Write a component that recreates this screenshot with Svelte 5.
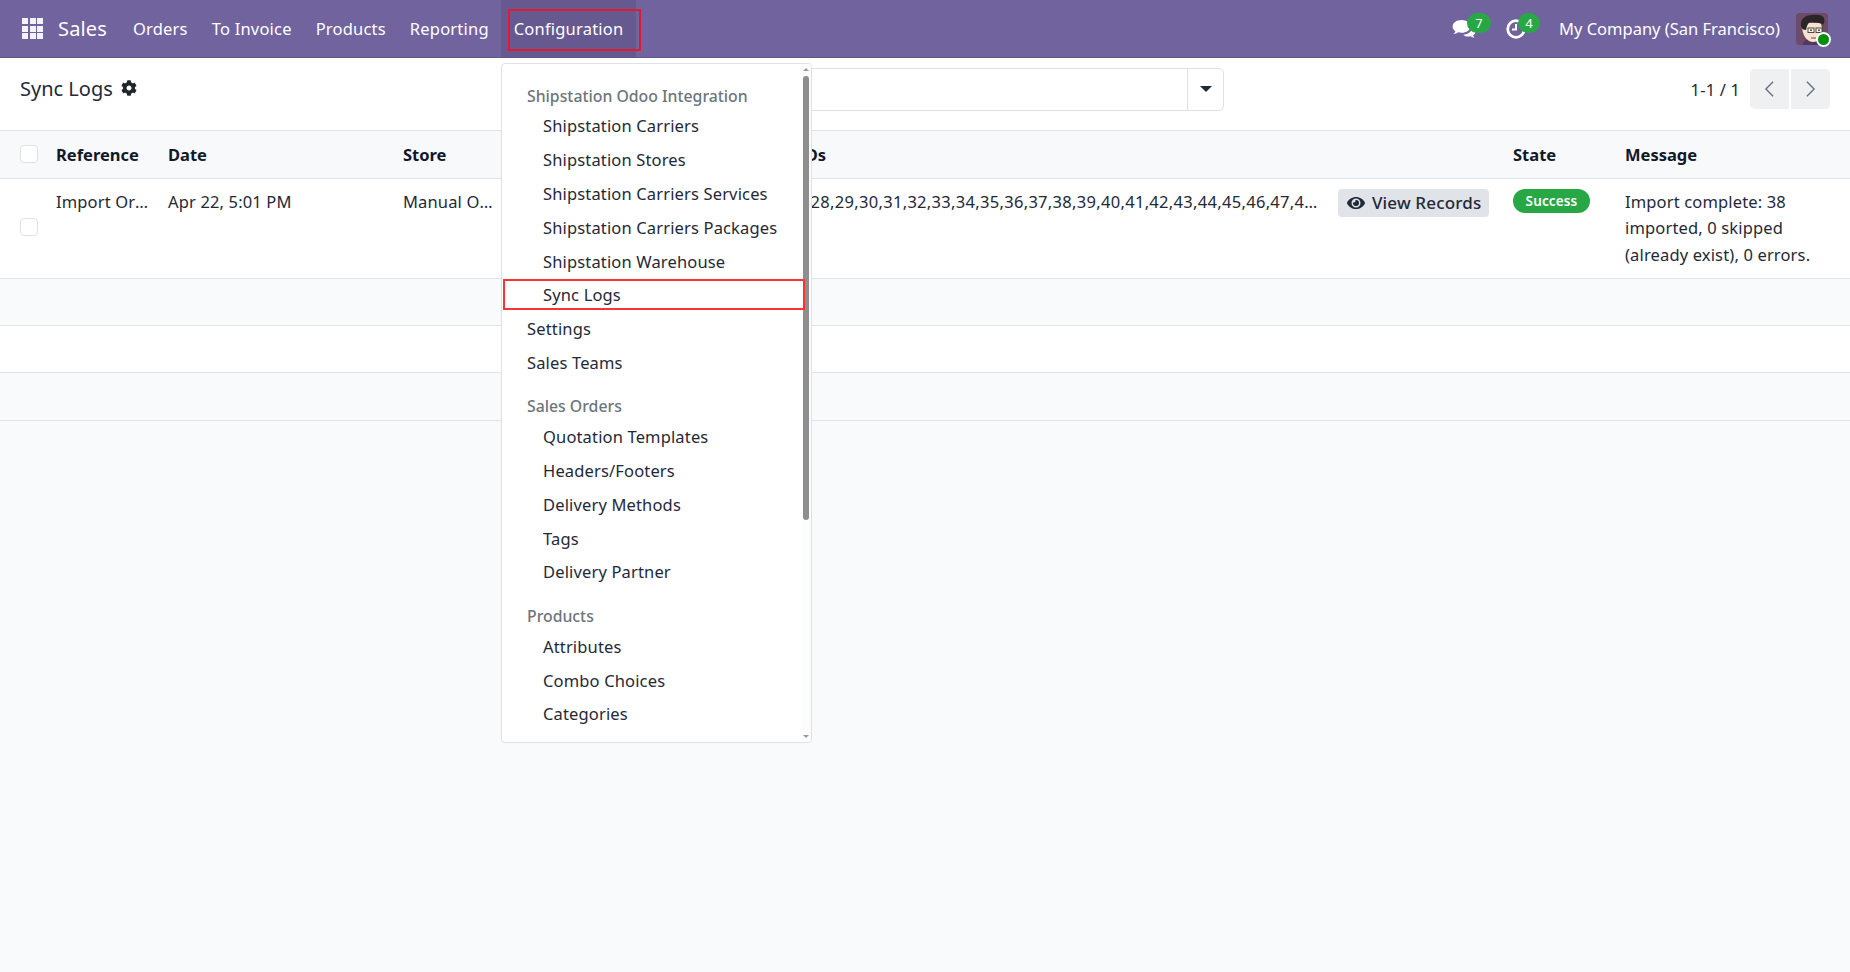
<script lang="ts">
  const appsCells = Array.from({ length: 9 });
  const navItems = ['Orders', 'To Invoice', 'Products', 'Reporting'];
  const ids = Array.from({ length: 38 }, (_, i) => i + 25).join(',');

  type Entry = { label: string; nested?: boolean; header?: boolean; marked?: boolean };
  const menu: Entry[] = [
    { label: 'Shipstation Odoo Integration', header: true },
    { label: 'Shipstation Carriers', nested: true },
    { label: 'Shipstation Stores', nested: true },
    { label: 'Shipstation Carriers Services', nested: true },
    { label: 'Shipstation Carriers Packages', nested: true },
    { label: 'Shipstation Warehouse', nested: true },
    { label: 'Sync Logs', nested: true, marked: true },
    { label: 'Settings' },
    { label: 'Sales Teams' },
    { label: 'Sales Orders', header: true },
    { label: 'Quotation Templates', nested: true },
    { label: 'Headers/Footers', nested: true },
    { label: 'Delivery Methods', nested: true },
    { label: 'Tags', nested: true },
    { label: 'Delivery Partner', nested: true },
    { label: 'Products', header: true },
    { label: 'Attributes', nested: true },
    { label: 'Combo Choices', nested: true },
    { label: 'Categories', nested: true },
    { label: 'Units', nested: true }
  ];
</script>

<div class="page">
  <header class="navbar">
    <div class="apps">
      {#each appsCells as _}
        <span></span>
      {/each}
    </div>
    <span class="brand">Sales</span>
    <nav class="nav-items">
      {#each navItems as item}
        <span class="nav-item">{item}</span>
      {/each}
      <span class="nav-item nav-item--open">Configuration</span>
    </nav>
    <div class="systray">
      <div class="tray-icon tray-icon--chat">
        <svg viewBox="0 0 24 20" width="24" height="20">
          <path fill="#fff" d="M9.5 1C4.5 1 .6 3.9.6 7.5c0 1.900 1.100 3.600 2.800 4.800-.3 1-1 1.900-1.900 2.700 1.700-.1 3.300-.8 4.500-1.700 1.100.3 2.300.5 3.500.5 5 0 8.900-2.900 8.900-6.300C18.400 3.900 14.500 1 9.500 1z"/>
          <path fill="#fff" d="M20 7.600c.1.300.1.600.1.900 0 4-4.100 7-9 7.200 1.400 1.300 3.300 1.900 5.300 1.900.8 0 1.600-.1 2.400-.3.900.7 2.300 1.300 3.600 1.400-.6-.6-1.100-1.400-1.400-2.100 1.500-1 2.400-2.400 2.400-4 0-1.900-1.100-3.500-2.900-4.600z"/>
        </svg>
        <span class="badge badge--chat">7</span>
      </div>
      <div class="tray-icon tray-icon--clock">
        <svg viewBox="0 0 22 22" width="22" height="22">
          <circle cx="11" cy="11" r="8.300" fill="none" stroke="#fff" stroke-width="2.800"/>
          <path d="M11 6v5.500H7" fill="none" stroke="#fff" stroke-width="2"/>
        </svg>
        <span class="badge badge--clock">4</span>
      </div>
      <span class="company">My Company (San Francisco)</span>
      <div class="avatar">
        <svg viewBox="0 0 32 32" width="32" height="32">
          <rect width="32" height="32" rx="4" fill="#6d4a68"/>
          <path d="M7 32c0-4 3-6 9-6s11 2 11 6z" fill="#4f3a5c"/>
          <path d="M6 13c0 9 5 16 11 16s9-5 9-13l-1-6H10z" fill="#f6e2cf"/>
          <path d="M5 13C4 6 9 2 16 2c5-1 11 0 12 3 1 3 0 5-1 7-2-2-7-3-12-3-2 0-3 2-4 4l-1 4c-3 0-4-1-5-4z" fill="#2b2528"/>
          <rect x="12" y="15" width="6" height="4.500" fill="#f9efe4" stroke="#3a3a3a" stroke-width="0.900"/>
          <rect x="20" y="15" width="6" height="4.500" fill="#f9efe4" stroke="#3a3a3a" stroke-width="0.900"/>
          <circle cx="15" cy="17.200" r="0.900" fill="#333"/>
          <circle cx="23" cy="17.200" r="0.900" fill="#333"/>
          <path d="M15 25h5" stroke="#a5584f" stroke-width="1.200"/>
        </svg>
        <span class="online"></span>
      </div>
    </div>
  </header>

  <section class="control-panel">
    <div class="title">
      <span>Sync Logs</span>
      <svg class="gear" viewBox="0 0 512 512" width="16" height="16">
        <path fill="#212529" d="M487.400 315.700l-42.600-24.600c4.300-23.200 4.300-47 0-70.200l42.600-24.600c4.900-2.800 7.100-8.600 5.500-14-11.100-35.600-30-67.800-54.700-94.600-3.800-4.100-10-5.100-14.800-2.300L380.800 110c-17.900-15.400-38.500-27.300-60.800-35.100V25.800c0-5.600-3.900-10.500-9.400-11.700-36.700-8.200-74.300-7.800-109.200 0-5.500 1.200-9.400 6.100-9.400 11.700V75c-22.200 7.900-42.800 19.800-60.800 35.100L88.700 85.500c-4.900-2.800-11-1.900-14.800 2.300-24.700 26.700-43.600 58.900-54.700 94.600-1.700 5.400.6 11.200 5.500 14L67.300 221c-4.300 23.200-4.300 47 0 70.200l-42.600 24.600c-4.900 2.800-7.100 8.600-5.500 14 11.100 35.600 30 67.800 54.700 94.600 3.800 4.100 10 5.100 14.800 2.300l42.600-24.600c17.900 15.400 38.500 27.300 60.800 35.100v49.200c0 5.600 3.900 10.500 9.400 11.700 36.700 8.200 74.300 7.800 109.200 0 5.500-1.200 9.400-6.100 9.400-11.700v-49.200c22.200-7.900 42.800-19.800 60.800-35.100l42.600 24.600c4.900 2.800 11 1.900 14.800-2.300 24.700-26.700 43.600-58.900 54.700-94.600 1.500-5.500-.7-11.300-5.600-14.100zM256 336c-44.100 0-80-35.900-80-80s35.900-80 80-80 80 35.900 80 80-35.900 80-80 80z"/>
      </svg>
    </div>
    <div class="search">
      <span class="search-input"></span>
      <span class="search-toggle"><i class="caret"></i></span>
    </div>
    <div class="pager">
      <span class="pager-value">1-1 / 1</span>
      <div class="pager-buttons">
        <span class="pager-btn">
          <svg viewBox="0 0 12 20" width="11" height="18"><path d="M10 2L2 10l8 8" fill="none" stroke="#6b7280" stroke-width="1.600"/></svg>
        </span>
        <span class="pager-btn">
          <svg viewBox="0 0 12 20" width="11" height="18"><path d="M2 2l8 8-8 8" fill="none" stroke="#6b7280" stroke-width="1.600"/></svg>
        </span>
      </div>
    </div>
  </section>

  <table class="logs">
    <colgroup>
      <col style="width: 48px" />
      <col style="width: 112px" />
      <col style="width: 235px" />
      <col style="width: 108px" />
      <col style="width: 227px" />
      <col style="width: 600px" />
      <col style="width: 175px" />
      <col style="width: 112px" />
      <col />
    </colgroup>
    <thead>
      <tr>
        <th class="check-cell"><span class="check"></span></th>
        <th>Reference</th>
        <th>Date</th>
        <th>Store</th>
        <th></th>
        <th>Record IDs</th>
        <th></th>
        <th>State</th>
        <th>Message</th>
      </tr>
    </thead>
    <tbody>
      <tr class="data-row">
        <td class="check-cell check-cell--mid"><span class="check"></span></td>
        <td class="clip">Import Orders</td>
        <td>Apr 22, 5:01 PM</td>
        <td class="clip">Manual Orders</td>
        <td></td>
        <td class="clip ids">{ids}</td>
        <td>
          <span class="view-btn">
            <svg viewBox="0 0 576 512" width="18" height="16">
              <path fill="#1f2937" d="M572.500 241.400C518.300 135.600 410.900 64 288 64S57.700 135.600 3.500 241.400a32.400 32.400 0 0 0 0 29.200C57.700 376.400 165.100 448 288 448s230.300-71.600 284.500-177.400a32.400 32.400 0 0 0 0-29.200zM288 400a144 144 0 1 1 144-144 143.900 143.900 0 0 1-144 144zm0-240a95.300 95.300 0 0 0-25.300 3.800 47.900 47.900 0 0 1-66.900 66.900A95.800 95.800 0 1 0 288 160z"/>
            </svg>
            View Records
          </span>
        </td>
        <td><span class="state">Success</span></td>
        <td class="message">Import complete: 38 imported, 0 skipped (already exist), 0 errors.</td>
      </tr>
      <tr class="empty"><td colspan="9"></td></tr>
      <tr class="empty empty--white"><td colspan="9"></td></tr>
      <tr class="empty"><td colspan="9"></td></tr>
    </tbody>
  </table>

  <div class="menu">
    <div class="menu-list">
      {#each menu as entry}
        <div
          class="entry"
          class:entry--header={entry.header}
          class:entry--nested={entry.nested}
          class:entry--marked={entry.marked}
        >
          {entry.label}
        </div>
      {/each}
    </div>
    <div class="scroll">
      <i class="scroll-up"></i>
      <div class="scroll-thumb"></div>
      <i class="scroll-down"></i>
    </div>
  </div>
</div>

<style>
  :global(body) {
    margin: 0;
    background: #f9fafb;
  }

  .page {
    position: relative;
    width: 1850px;
    height: 972px;
    overflow: hidden;
    font-family: "Noto Sans", sans-serif;
    font-size: 16.500px;
    letter-spacing: 0.15px;
    color: #1f2937;
  }

  .navbar {
    display: flex;
    align-items: center;
    height: 57px;
    padding-left: 22px;
    background: #71639e;
    border-bottom: 1px solid #63568f;
    color: #fff;
  }

  .apps {
    display: grid;
    grid-template-columns: repeat(3, 6px);
    grid-auto-rows: 6px;
    gap: 1.500px;
  }

  .apps span {
    background: #f5f3fa;
  }

  .brand {
    margin-left: 15px;
    font-size: 20px;
  }

  .nav-items {
    display: flex;
    align-self: stretch;
    margin-left: 14px;
    letter-spacing: 0.2px;
  }

  .nav-item {
    display: flex;
    align-items: center;
    padding: 0 12px;
  }

  .nav-item--open {
    position: relative;
    background: #665990;
    padding: 0 13px;
  }

  .nav-item--open::after {
    content: "";
    position: absolute;
    top: 9px;
    left: 7px;
    width: 133px;
    height: 42px;
    border: 2px solid #e01b2e;
    box-sizing: border-box;
  }

  .systray {
    display: flex;
    align-items: center;
    margin-left: auto;
  }

  .tray-icon {
    position: relative;
    display: flex;
  }

  .tray-icon--chat {
    margin-right: 29px;
  }

  .tray-icon--clock {
    margin-right: 32px;
  }

  .badge {
    position: absolute;
    top: -6px;
    left: 15px;
    width: 24px;
    height: 20px;
    border-radius: 10px;
    background: #28a745;
    font-size: 13px;
    line-height: 20px;
    text-align: center;
  }

  .badge--clock {
    left: 13px;
    width: 22px;
    top: -5px;
  }

  .company {
    margin-right: 16px;
    letter-spacing: 0;
  }

  .avatar {
    position: relative;
    display: flex;
    margin-right: 22px;
  }

  .online {
    position: absolute;
    right: -3px;
    bottom: -2px;
    width: 11px;
    height: 11px;
    border: 2px solid #fff;
    border-radius: 50%;
    background: #008f0a;
  }

  .control-panel {
    display: grid;
    grid-template-columns: 501px 703px 1fr;
    align-items: center;
    height: 73px;
    padding: 0 20px 10px;
    background: #fff;
    box-sizing: border-box;
    border-bottom: 1px solid #e0e3e8;
  }

  .title {
    display: flex;
    align-items: center;
    gap: 8px;
    margin-top: -2px;
    font-size: 20px;
    letter-spacing: 0;
    color: #1f2937;
  }

  .search {
    display: flex;
    height: 43px;
    border: 1px solid #dee2e6;
    border-radius: 5px;
    box-sizing: border-box;
  }

  .search-input {
    flex: 1;
  }

  .search-toggle {
    display: flex;
    align-items: center;
    justify-content: center;
    width: 35px;
    border-left: 1px solid #dee2e6;
  }

  .caret {
    border-top: 6px solid #1f2937;
    border-left: 6px solid transparent;
    border-right: 6px solid transparent;
  }

  .pager {
    display: flex;
    align-items: center;
    justify-content: flex-end;
    gap: 10px;
  }

  .pager-buttons {
    display: flex;
    gap: 2px;
  }

  .pager-btn {
    display: flex;
    align-items: center;
    justify-content: center;
    width: 39px;
    height: 40px;
    background: #eff0f2;
  }

  .pager-btn:first-child {
    border-radius: 5px 0 0 5px;
  }

  .pager-btn:last-child {
    border-radius: 0 5px 5px 0;
  }

  .logs {
    width: 1850px;
    table-layout: fixed;
    border-collapse: collapse;
  }

  .logs th {
    height: 47px;
    padding: 0 8px;
    background: #f8f9fa;
    border-bottom: 1px solid #e0e3e8;
    color: #111827;
    font-weight: 700;
    letter-spacing: 0;
    text-align: left;
    box-sizing: border-box;
  }

  .logs td {
    padding: 10px 8px 0;
    vertical-align: top;
    line-height: 26.500px;
    background: #fff;
  }

  .clip {
    overflow: hidden;
    white-space: nowrap;
    text-overflow: ellipsis;
  }

  .ids {
    letter-spacing: 0.3px;
  }

  .data-row td {
    height: 89px;
    border-bottom: 1px solid #e0e3e8;
  }

  .logs .check-cell {
    padding: 0 0 0 20px;
  }

  .logs .check-cell--mid {
    padding: 0 0 2px 20px;
    vertical-align: middle;
  }

  .check {
    display: block;
    width: 18px;
    height: 18px;
    border: 1px solid #dee2e6;
    border-radius: 4px;
    background: #fff;
    box-sizing: border-box;
  }

  .view-btn {
    display: inline-flex;
    align-items: center;
    gap: 7px;
    height: 28px;
    padding: 0 8px 0 9px;
    border-radius: 4px;
    background: #e0e3e8;
    color: #1f2937;
    font-size: 17px;
    font-weight: 500;
    line-height: 28px;
    white-space: nowrap;
    vertical-align: top;
  }

  .state {
    display: block;
    width: 77px;
    height: 24px;
    border-radius: 12px;
    background: #28a745;
    color: #fff;
    font-size: 13.500px;
    font-weight: 600;
    line-height: 24px;
    text-align: center;
  }

  .logs .empty td {
    height: 47.400px;
    padding: 0;
    background: #f9fafb;
    border-bottom: 1px solid #e0e3e8;
    box-sizing: border-box;
  }

  .logs .empty--white td {
    background: #fff;
  }

  .menu {
    position: absolute;
    top: 63px;
    left: 501px;
    width: 311px;
    height: 680px;
    overflow: hidden;
    background: #fff;
    border: 1px solid #dee2e6;
    border-radius: 4px;
    box-sizing: border-box;
  }

  .menu-list {
    padding-top: 18px;
  }

  .entry {
    position: relative;
    display: flex;
    align-items: center;
    height: 33.800px;
    margin-left: 1px;
    margin-right: 6px;
    padding-left: 24px;
    box-sizing: border-box;
    white-space: nowrap;
    color: #1f2937;
  }

  .entry--nested {
    padding-left: 40px;
  }

  .entry--header {
    height: 27px;
    margin-top: 13.500px;
    color: #6c757d;
    font-size: 15.800px;
    font-weight: 500;
    letter-spacing: 0;
  }

  .entry:first-child {
    margin-top: 0;
  }

  .entry--marked {
    z-index: 1;
  }

  .entry--marked::after {
    content: "";
    position: absolute;
    top: 1.500px;
    bottom: 1.500px;
    left: 0;
    right: 0;
    border: 2px solid #f33;
  }

  .scroll {
    position: absolute;
    top: 0;
    right: 0;
    bottom: 0;
    width: 9px;
    background: #fcfcfc;
  }

  .scroll-thumb {
    position: absolute;
    top: 12px;
    left: 1px;
    width: 6px;
    height: 444px;
    border-radius: 3px;
    background: #8e8e8e;
  }

  .scroll-up,
  .scroll-down {
    position: absolute;
    left: 1px;
    border-left: 3px solid transparent;
    border-right: 3px solid transparent;
  }

  .scroll-up {
    top: 4px;
    border-bottom: 3px solid #9a9a9a;
  }

  .scroll-down {
    bottom: 4px;
    border-top: 3px solid #9a9a9a;
  }
</style>
